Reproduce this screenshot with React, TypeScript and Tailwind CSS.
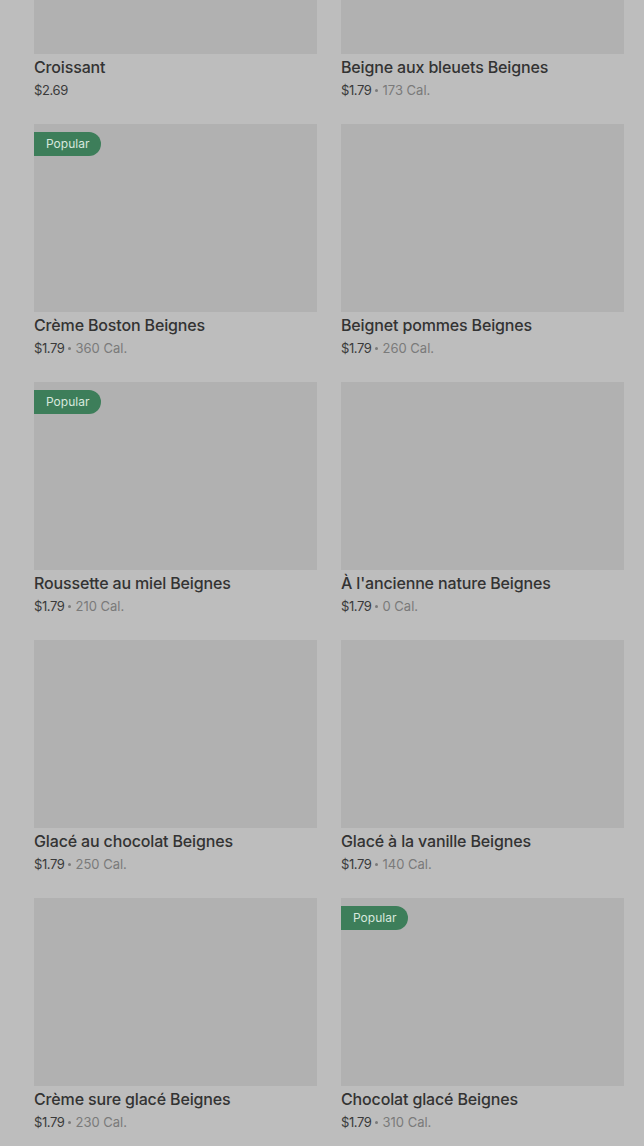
import React from "react";

type Item = { name: string; price: string; cal?: string; popular?: boolean };

const items: Item[] = [
  { name: "Croissant", price: "$2.69" },
  { name: "Beigne aux bleuets Beignes", price: "$1.79", cal: "173 Cal." },
  { name: "Crème Boston Beignes", price: "$1.79", cal: "360 Cal.", popular: true },
  { name: "Beignet pommes Beignes", price: "$1.79", cal: "260 Cal." },
  { name: "Roussette au miel Beignes", price: "$1.79", cal: "210 Cal.", popular: true },
  { name: "À l'ancienne nature Beignes", price: "$1.79", cal: "0 Cal." },
  { name: "Glacé au chocolat Beignes", price: "$1.79", cal: "250 Cal." },
  { name: "Glacé à la vanille Beignes", price: "$1.79", cal: "140 Cal." },
  { name: "Crème sure glacé Beignes", price: "$1.79", cal: "230 Cal." },
  { name: "Chocolat glacé Beignes", price: "$1.79", cal: "310 Cal.", popular: true },
];

export default function App() {
  return (
    <div
      className="w-[644px] h-[1146px] overflow-hidden bg-[#bdbdbd]"
      style={{ fontFamily: "Inter, 'Liberation Sans', sans-serif" }}
    >
      <div className="-mt-[134px] pl-[34px] pr-[20px] grid grid-cols-2 gap-x-[24px] gap-y-[24px]">
        {items.map((it) => (
          <div key={it.name} className="flex flex-col">
            <div className="relative h-[188px] bg-[#b1b1b1]">
              {it.popular && (
                <div className="absolute left-0 top-[8px] h-[24px] px-[12px] flex items-center rounded-r-full bg-[#3d7e5a] text-[12px] text-[#d8e8de]">
                  Popular
                </div>
              )}
            </div>
            <div className="mt-[1px] h-[24px] leading-[24px] text-[16px] font-medium text-[#333333] tracking-[-0.15px]">
              {it.name}
            </div>
            <div className="h-[21px] pt-[2px] flex items-center text-[13px] text-[#3a3a3a]">
              <span className="tracking-[-0.4px]">{it.price}</span>
              {it.cal && (
                <>
                  <span className="mx-[4px] w-[3px] h-[3px] rounded-full bg-[#7a7a7a]" />
                  <span className="text-[#7a7a7a]">{it.cal}</span>
                </>
              )}
            </div>
          </div>
        ))}
      </div>
    </div>
  );
}
